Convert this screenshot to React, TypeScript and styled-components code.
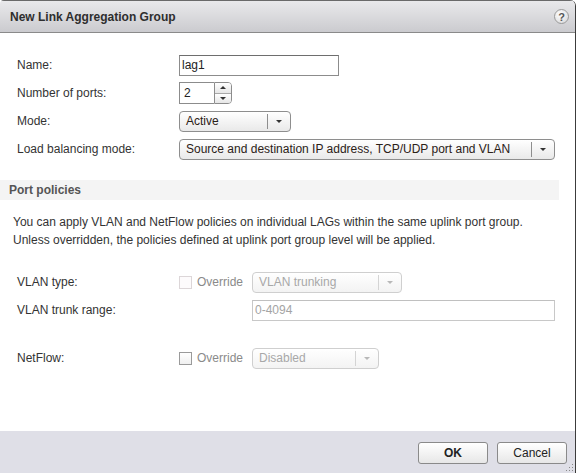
import React from "react";
import styled, { createGlobalStyle, css } from "styled-components";

const Global = createGlobalStyle`
  html, body { margin: 0; padding: 0; background: #fff; }
  body { font-family: "Liberation Sans", Arial, sans-serif; font-size: 12px; color: #333; }
  #root { width: 577px; height: 473px; overflow: hidden; }
`;

const Dialog = styled.div`
  width: 575px;
  height: 473px;
  display: flex;
  flex-direction: column;
  border-right: 1px solid #3c3c3c;
  border-top-right-radius: 6px;
  border-top-left-radius: 4px;
  overflow: hidden;
  background: #fff;
  position: relative;
`;

const TitleBar = styled.div`
  flex: none;
  display: flex;
  align-items: center;
  justify-content: space-between;
  padding: 0 6px 0 10px;
  background: linear-gradient(#e9e9eb, #cbcbcf);
  border-top: 1px solid #6a6a6a;
  border-bottom: 1px solid #8a8a8a;
  box-sizing: border-box;
  height: 33px;
`;

const Title = styled.div`
  font-weight: bold;
  font-size: 12px;
  color: #2e2e2e;
`;

const HelpIcon = styled.div`
  width: 15px;
  height: 15px;
  border-radius: 50%;
  border: 1px solid #9a9a9a;
  background: radial-gradient(circle at 40% 35%, #ffffff, #d4d4d6);
  display: flex;
  align-items: center;
  justify-content: center;
  font-weight: bold;
  font-size: 11px;
  color: #555;
  box-sizing: border-box;
`;

const Body = styled.div`
  flex: 1;
  min-height: 0;
  display: flex;
  flex-direction: column;
`;

const Form = styled.div<{ $top: number }>`
  display: grid;
  grid-template-columns: 162px auto;
  grid-auto-rows: 22px;
  row-gap: 6px;
  padding: ${(p) => p.$top}px 0 0 17px;
  align-items: center;
`;

const Label = styled.div`
  color: #333;
  white-space: nowrap;
`;

const TextInput = styled.div<{ $w: number; $disabled?: boolean }>`
  width: ${(p) => p.$w}px;
  height: 21px;
  box-sizing: border-box;
  border: 1px solid ${(p) => (p.$disabled ? "#c8c8c8" : "#8c8c8c")};
  border-top-color: ${(p) => (p.$disabled ? "#c0c0c0" : "#6e6e6e")};
  background: #fff;
  padding: 0 2px;
  line-height: 19px;
  color: ${(p) => (p.$disabled ? "#a4a4a4" : "#222")};
`;

const Spinner = styled.div`
  display: flex;
  width: 53px;
  height: 22px;
`;

const SpinField = styled.div`
  width: 35px;
  height: 22px;
  box-sizing: border-box;
  border: 1px solid #8c8c8c;
  border-right: none;
  padding: 0 4px;
  line-height: 20px;
  color: #222;
`;

const SpinButtons = styled.div`
  width: 18px;
  display: flex;
  flex-direction: column;
  border: 1px solid #8c8c8c;
  border-radius: 0 4px 4px 0;
  overflow: hidden;
  box-sizing: border-box;
`;

const SpinBtn = styled.div<{ $down?: boolean }>`
  flex: 1;
  display: flex;
  align-items: center;
  justify-content: center;
  background: linear-gradient(#ffffff, #e6e6e6);
  ${(p) =>
    p.$down &&
    css`
      border-top: 1px solid #a8a8a8;
    `}
`;

const Arrow = styled.span<{ $up?: boolean; $disabled?: boolean }>`
  width: 0;
  height: 0;
  border-left: 3px solid transparent;
  border-right: 3px solid transparent;
  ${(p) =>
    p.$up
      ? css`border-bottom: 3px solid #333;`
      : css`border-top: 3px solid ${p.$disabled ? "#b8b8b8" : "#333"};`}
`;

const Select = styled.div<{ $w: number; $disabled?: boolean }>`
  width: ${(p) => p.$w}px;
  height: 21px;
  box-sizing: border-box;
  display: flex;
  align-items: center;
  border: 1px solid ${(p) => (p.$disabled ? "#cfcfcf" : "#8e8e8e")};
  border-radius: 4px;
  background: ${(p) =>
    p.$disabled ? "linear-gradient(#ffffff, #f3f3f3)" : "linear-gradient(#ffffff, #e9e9e9)"};
  color: ${(p) => (p.$disabled ? "#a8a8a8" : "#2b2117")};
`;

const SelectText = styled.div`
  flex: 1;
  padding-left: 6px;
  white-space: nowrap;
  overflow: hidden;
`;

const SelectArrow = styled.div<{ $disabled?: boolean }>`
  width: 22px;
  height: 15px;
  border-left: 1px solid ${(p) => (p.$disabled ? "#d4d4d4" : "#8e8e8e")};
  display: flex;
  align-items: center;
  justify-content: center;
`;

const SectionBand = styled.div`
  margin-top: 20px;
  width: 559px;
  height: 20px;
  background: #f4f4f4;
  display: flex;
  align-items: center;
  padding-left: 9px;
  box-sizing: border-box;
  font-weight: bold;
  color: #555;
`;

const Description = styled.div`
  margin-top: 13px;
  padding-left: 13px;
  line-height: 18px;
  color: #333;
`;

const ControlCell = styled.div`
  display: flex;
  align-items: center;
`;

const OverrideBox = styled.div`
  display: flex;
  align-items: center;
  gap: 5px;
  width: 73px;
  color: #8a8a8a;
`;

const Check = styled.span<{ $disabled?: boolean }>`
  width: 13px;
  height: 13px;
  box-sizing: border-box;
  border: 1px solid ${(p) => (p.$disabled ? "#dcd6d8" : "#9a9a9a")};
  background: ${(p) => (p.$disabled ? "#fdfbfc" : "linear-gradient(#fff, #f0f0f0)")};
`;

const Spacer = styled.div`
  width: 73px;
`;

const Footer = styled.div`
  height: 42px;
  flex: none;
  background: #dfdfe7;
  display: flex;
  justify-content: flex-end;
  align-items: flex-start;
  gap: 9px;
  padding: 11px 8px 0 0;
  box-sizing: border-box;
  position: relative;
`;

const Button = styled.div<{ $primary?: boolean }>`
  width: 70px;
  height: 22px;
  box-sizing: border-box;
  border: 1px solid #8a8a8a;
  border-radius: 3px;
  background: linear-gradient(#ffffff, #e7e7e7);
  display: flex;
  align-items: center;
  justify-content: center;
  font-weight: ${(p) => (p.$primary ? "bold" : "normal")};
  color: #222;
`;

const Grip = styled.svg`
  position: absolute;
  right: 1px;
  bottom: 1px;
`;

export default function App() {
  return (
    <>
      <Global />
      <Dialog>
        <TitleBar>
          <Title>New Link Aggregation Group</Title>
          <HelpIcon>?</HelpIcon>
        </TitleBar>
        <Body>
          <Form $top={21}>
            <Label>Name:</Label>
            <TextInput $w={160}>lag1</TextInput>
            <Label>Number of ports:</Label>
            <Spinner>
              <SpinField>2</SpinField>
              <SpinButtons>
                <SpinBtn>
                  <Arrow $up />
                </SpinBtn>
                <SpinBtn $down>
                  <Arrow />
                </SpinBtn>
              </SpinButtons>
            </Spinner>
            <Label>Mode:</Label>
            <Select $w={112}>
              <SelectText>Active</SelectText>
              <SelectArrow>
                <Arrow />
              </SelectArrow>
            </Select>
            <Label>Load balancing mode:</Label>
            <Select $w={376}>
              <SelectText>Source and destination IP address, TCP/UDP port and VLAN</SelectText>
              <SelectArrow>
                <Arrow />
              </SelectArrow>
            </Select>
          </Form>

          <SectionBand>Port policies</SectionBand>
          <Description>
            You can apply VLAN and NetFlow policies on individual LAGs within the same uplink port group.
            <br />
            Unless overridden, the policies defined at uplink port group level will be applied.
          </Description>

          <Form $top={22}>
            <Label>VLAN type:</Label>
            <ControlCell>
              <OverrideBox>
                <Check $disabled />
                <span>Override</span>
              </OverrideBox>
              <Select $w={150} $disabled>
                <SelectText>VLAN trunking</SelectText>
                <SelectArrow $disabled>
                  <Arrow $disabled />
                </SelectArrow>
              </Select>
            </ControlCell>
            <Label>VLAN trunk range:</Label>
            <ControlCell>
              <Spacer />
              <TextInput $w={303} $disabled>
                0-4094
              </TextInput>
            </ControlCell>
          </Form>
          <Form $top={26}>
            <Label>NetFlow:</Label>
            <ControlCell>
              <OverrideBox>
                <Check />
                <span>Override</span>
              </OverrideBox>
              <Select $w={127} $disabled>
                <SelectText>Disabled</SelectText>
                <SelectArrow $disabled>
                  <Arrow $disabled />
                </SelectArrow>
              </Select>
            </ControlCell>
          </Form>
        </Body>
        <Footer>
          <Button $primary>OK</Button>
          <Button>Cancel</Button>
          <Grip width="9" height="9" viewBox="0 0 9 9">
            {[
              [7, 1],
              [7, 4],
              [4, 4],
              [7, 7],
              [4, 7],
              [1, 7],
            ].map(([x, y], i) => (
              <rect key={i} x={x} y={y} width="1" height="1" fill="#8a8a8a" />
            ))}
          </Grip>
        </Footer>
      </Dialog>
    </>
  );
}
